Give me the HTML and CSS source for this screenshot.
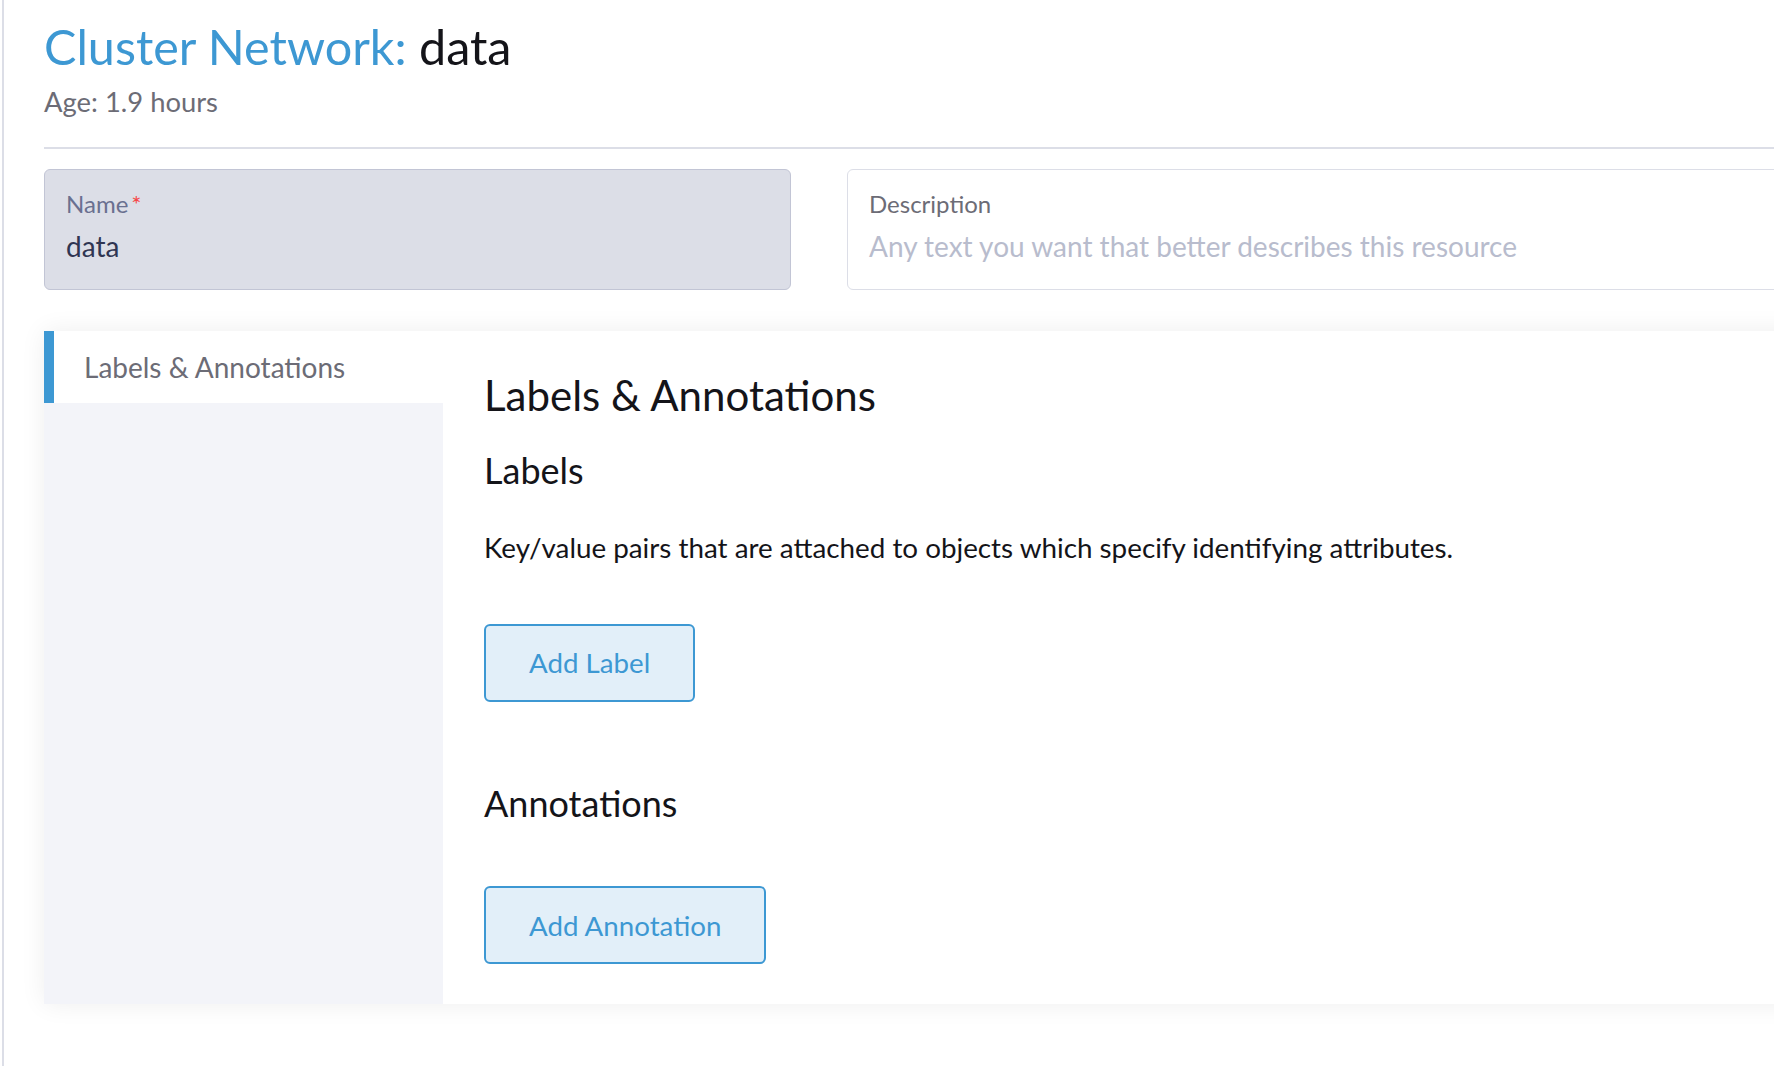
FILE: index.html
```html
<!DOCTYPE html>
<html lang="en">
<head>
<meta charset="utf-8">
<title>Cluster Network: data</title>
<link rel="stylesheet" href="styles.css">
</head>
<body>
<div class="layout">
  <div class="edge"></div>
  <main class="main">
    <header class="masthead">
      <h1 class="title"><span class="title-type">Cluster Network:</span> <span class="title-name">data</span></h1>
      <div class="age">Age: 1.9 hours</div>
    </header>
    <hr class="divider">
    <div class="fields">
      <div class="field field-disabled">
        <div class="field-label">Name<span class="req">*</span></div>
        <div class="field-value">data</div>
      </div>
      <div class="field field-desc">
        <div class="field-label">Description</div>
        <div class="field-placeholder">Any text you want that better describes this resource</div>
      </div>
    </div>
    <section class="tabbed">
      <nav class="tabs">
        <div class="tab tab-active">Labels &amp; Annotations</div>
      </nav>
      <div class="tab-body">
        <h2 class="h2">Labels &amp; Annotations</h2>
        <h3 class="h3 h3-first">Labels</h3>
        <p class="desc">Key/value pairs that are attached to objects which specify identifying attributes.</p>
        <button class="btn">Add Label</button>
        <h3 class="h3 h3-second">Annotations</h3>
        <button class="btn btn-second">Add Annotation</button>
      </div>
    </section>
  </main>
</div>
</body>
</html>
```
FILE: styles.css
```css
html, body {
  margin: 0;
  padding: 0;
  background: #ffffff;
  overflow: hidden;
}
body {
  font-family: "Lato", "Noto Sans", "Liberation Sans", sans-serif;
  color: #141419;
  line-height: 1.2;
}
.layout {
  display: flex;
  width: 2000px;
  min-height: 1066px;
}
.edge {
  flex: none;
  width: 2px;
  margin-left: 2px;
  background: #dcdee7;
}
.main {
  flex: 1;
  padding: 17px 0 0 40px;
}
.title {
  margin: 0;
  font-size: 48.5px;
  font-weight: 400;
  line-height: 1.2;
}
.title-type {
  color: #3d98d3;
}
.title-name {
  color: #141419;
}
.age {
  margin-top: 11px;
  font-size: 27.4px;
  color: #6c6c76;
}
.divider {
  margin: 28px 0 0 0;
  border: 0;
  height: 2px;
  background: #dcdee7;
}
.fields {
  display: flex;
  gap: 56px;
  margin-top: 20px;
}
.field {
  box-sizing: border-box;
  height: 121px;
  padding: 20px 21px 0 21px;
  border-radius: 6px;
  border: 1px solid #dcdee7;
  background: #ffffff;
}
.field-disabled {
  flex: none;
  width: 747px;
  background: #dcdee7;
  border-color: #c2c5d5;
}
.field-desc {
  flex: 1;
}
.field-label {
  font-size: 24px;
  color: #6c6c76;
}
.field-disabled .field-label {
  color: #6a7090;
}
.req {
  color: #f64747;
  margin-left: 3px;
}
.field-value {
  margin-top: 11px;
  font-size: 28px;
  color: #2f3552;
}
.field-placeholder {
  margin-top: 11px;
  font-size: 28px;
  color: #b8bccd;
}
.tabbed {
  display: flex;
  margin-top: 41px;
  background: #ffffff;
  box-shadow: 0 0 24px rgba(0, 0, 0, 0.07);
}
.tabs {
  flex: none;
  width: 399px;
  background: #f3f4f9;
}
.tab {
  box-sizing: border-box;
  height: 72px;
  padding: 20px 0 0 30px;
  font-size: 28px;
  color: #6c6c76;
}
.tab-active {
  background: #ffffff;
  border-left: 10px solid #3d98d3;
}
.tab-body {
  flex: 1;
  padding: 39px 0 40px 41px;
}
.h2 {
  margin: 0;
  font-size: 42px;
  font-weight: 400;
  line-height: 1.2;
}
.h3 {
  margin: 0;
  font-size: 36px;
  font-weight: 400;
  line-height: 1.2;
}
.h3-first {
  margin-top: 29px;
}
.h3-second {
  margin-top: 80px;
}
.desc {
  margin: 38px 0 0 0;
  font-size: 27.8px;
  color: #141419;
}
.btn {
  display: block;
  box-sizing: border-box;
  height: 78px;
  margin-top: 60px;
  padding: 0 43px;
  font-family: "Lato", "Noto Sans", "Liberation Sans", sans-serif;
  font-size: 27.7px;
  line-height: 1.2;
  color: #3d98d3;
  background: #e2eff9;
  border: 2px solid #3d98d3;
  border-radius: 6px;
}
.btn-second {
  margin-top: 61px;
}
```
